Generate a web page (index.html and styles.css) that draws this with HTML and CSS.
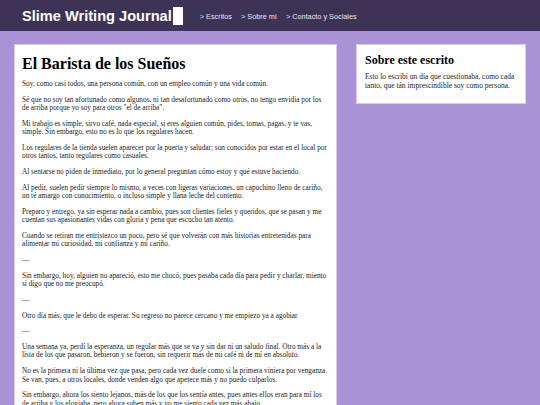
FILE: index.html
```html
<!DOCTYPE html>
<html lang="es">
<head>
<meta charset="utf-8">
<title>Slime Writing Journal</title>
<link rel="stylesheet" href="styles.css">
</head>
<body>
<header class="topbar">
  <div class="brand">Slime Writing Journal<span class="cursor"></span></div>
  <nav class="nav">
    <a href="#">&gt; Escritos</a>
    <a href="#">&gt; Sobre mí</a>
    <a href="#">&gt; Contacto y Sociales</a>
  </nav>
</header>
<div class="layout">
  <article class="card story">
    <h1 class="story-title">El Barista de los Sueños</h1>
    <p>Soy, como casi todos, una persona común, con un empleo común y una vida común.</p>
    <p>Sé que no soy tan afortunado como algunos, ni tan desafortunado como otros, no tengo envidia por los de arriba porque yo soy para otros "el de arriba".</p>
    <p>Mi trabajo es simple, sirvo café, nada especial, si eres alguien común, pides, tomas, pagas, y te vas, simple. Sin embargo, esto no es lo que los regulares hacen.</p>
    <p>Los regulares de la tienda suelen aparecer por la puerta y saludar; son conocidos por estar en el local por otros tantos, tanto regulares como casuales.</p>
    <p>Al sentarse no piden de inmediato, por lo general preguntan cómo estoy y qué estuve haciendo.</p>
    <p>Al pedir, suelen pedir siempre lo mismo, a veces con ligeras variaciones, un capuchino lleno de cariño, un té amargo con conocimiento, o incluso simple y llana leche del contento.</p>
    <p>Preparo y entrego, ya sin esperar nada a cambio, pues son clientes fieles y queridos, que se pasan y me cuentan sus apasionantes vidas con gloria y pena que escucho tan atento.</p>
    <p>Cuando se retiran me entristezco un poco, pero sé que volverán con más historias entretenidas para alimentar mi curiosidad, mi confianza y mi cariño.</p>
    <p>—</p>
    <p>Sin embargo, hoy, alguien no apareció, esto me chocó, pues pasaba cada día para pedir y charlar, miento si digo que no me preocupó.</p>
    <p>—</p>
    <p>Otro día más, que le debo de esperar. Su regreso no parece cercano y me empiezo ya a agobiar</p>
    <p>—</p>
    <p>Una semana ya, perdí la esperanza, un regular más que se va y sin dar ni un saludo final. Otro más a la lista de los que pasaron, bebieron y se fueron, sin requerir más de mi café ni de mí en absoluto.</p>
    <p>No es la primera ni la última vez que pasa, pero cada vez duele como si la primera viniera por venganza. Se van, pues, a otros locales, donde venden algo que apetece más y no puedo culparlos.</p>
    <p>Sin embargo, ahora los siento lejanos, más de los que los sentía antes, pues antes ellos eran para mí los de arriba y los elogiaba, pero ahora suben más y yo me siento cada vez más abajo.</p>
  </article>
  <aside class="card side">
    <h2 class="side-title">Sobre este escrito</h2>
    <p>Esto lo escribí un día que cuestionaba, como cada tanto, que tán imprescindible soy como persona.</p>
  </aside>
</div>
</body>
</html>
```
FILE: styles.css
```css
html, body {
  margin: 0;
  padding: 0;
}
body {
  background: #a992d5;
  font-family: "Liberation Serif", "Times New Roman", serif;
  color: #222;
  height: 405px;
  overflow: hidden;
}
.topbar {
  background: #3d3357;
  height: 31px;
  display: flex;
  align-items: center;
  padding-left: 22px;
}
.brand {
  font-family: "Liberation Sans", Arial, sans-serif;
  font-weight: bold;
  font-size: 14.6px;
  color: #fff;
  display: flex;
  align-items: center;
}
.cursor {
  display: inline-block;
  width: 10px;
  height: 18px;
  background: #fff;
  margin-left: 1px;
}
.nav {
  display: flex;
  gap: 9px;
  margin-left: 17px;
  margin-top: 2px;
}
.nav a {
  font-family: "Liberation Sans", Arial, sans-serif;
  font-size: 7.3px;
  color: #e8e4f0;
  text-decoration: none;
}
.layout {
  display: flex;
  align-items: flex-start;
  gap: 21px;
  padding: 14px 15px 0 15px;
}
.card {
  background: #fff;
  box-shadow: 0 0 0 1px #d8cdea;
  box-sizing: border-box;
}
.story {
  width: 321px;
  flex: none;
  padding: 7px 7px 20px 7px;
}
.story-title {
  font-size: 16px;
  font-weight: bold;
  color: #000;
  margin: 2px 0 6px 0;
  line-height: 20px;
}
.story p {
  font-size: 7.3px;
  line-height: 8.4px;
  margin: 0 0 7.3px 0;
}
.side {
  width: 168px;
  flex: none;
  padding: 7px 6px 13px 8px;
}
.side-title {
  font-size: 12px;
  font-weight: bold;
  color: #000;
  margin: 0 0 5px 0;
  line-height: 16px;
}
.side p {
  font-size: 7.5px;
  line-height: 8.6px;
  margin: 0;
}
```
